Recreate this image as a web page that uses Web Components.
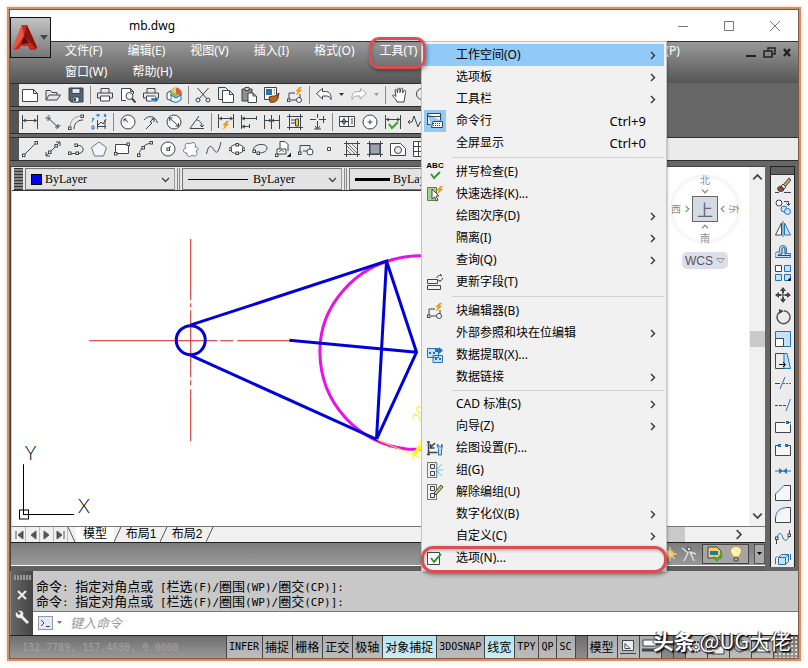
<!DOCTYPE html>
<html lang="zh-CN">
<head>
<meta charset="utf-8">
<title>mb.dwg</title>
<style>
html,body{margin:0;background:#fff}
body{font:12px/16px "Noto Sans","Noto Sans CJK SC",sans-serif;color:#000;--dark:#666;--line:#2e2e2e;--bar:#ebebeb}
</style>
</head>
<body>
<cad-window>
  <title-bar slot="title">mb.dwg</title-bar>
  <menu-bar slot="menu"></menu-bar>
  <tool-bar slot="tools" class="part" label="标准" icons="new open save | print preview plot publish | cut copy paste match blockedit | undo drop redo dropgray | pan zoom"></tool-bar>
  <tool-bar slot="tools" class="part" label="标注" icons="dimlin dimali dimarc dimord | dimrad dimjog dimdia dimang | qdim dimbase dimcont dimspace dimbreak | tol center inspect jogline"></tool-bar>
  <tool-bar slot="tools" label="绘图" icons="line xline pline polygon rect arc circle cloud spline ellipse ellarc insert block point hatch gradient region table"></tool-bar>
  <drawing-pane slot="drawing"></drawing-pane>
  <side-tools slot="side" icons="erase copyobj mirror offset array move rotate scale stretch trim extend breakpt break join chamfer fillet blend explode"></side-tools>
  <command-line slot="command"></command-line>
  <status-bar slot="status"></status-bar>
  <tools-menu slot="popup"></tools-menu>
  <call-out slot="popup" class="one"></call-out>
  <water-mark slot="popup"><strong>头条</strong> @UG大佬</water-mark>
</cad-window>
<script>
const B='#2672b8', Y='#f3a21b';
const bolt=(x,y)=>`<path d="M${x+4} ${y}l-4 4h2.500l-2 4 5-5h-2.500l2.500-3z" fill="${Y}" stroke="#d07c00" stroke-width=".5"/>`;
const sq=(x,y)=>`<rect x="${x}" y="${y}" width="2.500" height="2.500" fill="#fff"/>`;
const p=(d,a='')=>`<path d="${d}" ${a}/>`;
const F='fill="#3d454d" stroke="none"', LB='fill="#c4e2f8"', BL=` stroke="${B}"`, BF=`fill="${B}" stroke="none"`;
const printer=p('M4 6V1.500h8V6M3.500 11h-3V6h15v5h-3')+p('M3.500 9h9v5h-9z','fill="#fff"');
const ICONS={
 new:p('M.5 2.500h11l4 4v8h-15zM11.500 2.500v4h4','fill="#fff"'),
 open:p('M1 13V3.500h4.500l1.500 2h5V8M1 13l3-5h11.500l-3.500 5z','fill="#e3e6ea"'),
 save:p('M1 1h14v14H3l-2-2z','fill="#56617a"')+p('M4 1.500h8v5H4z','fill="#dfe5ef"')+p('M5 10h6v5H5z','fill="#fff"')+p('M6 11h2v3H6z',F),
 print:printer,
 preview:p('M6 13.500H1.500v-12h9l3 3V7M10.500 1.500v3h3','fill="#fff"')+'<circle cx="9.500" cy="9" r="3.500" fill="#eef4fa"/>'+p('M12 11.500l3.500 4','stroke-width="2"'),
 plot:printer+p('M8 11h4V8.500l4 4-4 3.500V14H8z',`fill="${B}" stroke="#fff" stroke-width=".5"`),
 publish:p('M1 6l5-3v11L1 12z','fill="#fff"')+'<circle cx="10" cy="6.500" r="5.500" fill="#7cc576" stroke="#888"/>'+p('M10 1a5.500 5.500 0 0 1 5 7.500L10 6.500z','fill="#ef5a35" stroke="none"')+p('M10 6.500L5 4a5.500 5.500 0 0 1 5-3z','fill="#f7d34a" stroke="none"')+p('M5 8l5 3 5-3v5l-5 2.500L5 14z','fill="#e8f3fb"'+BL),
 cut:p('M2.500 1L12 12M13.500 1L4 12')+'<circle cx="3" cy="13" r="2"/><circle cx="13" cy="13" r="2"/>',
 copy:p('M4 12.500H.5v-12h7l3 3')+p('M4.500 3.500h7l4 4v8h-11zM11.500 3.500v4h4','fill="#fff"'),
 paste:p('M1 2h10v12H1z','fill="#8e8e8e"')+p('M4 .5h4v3H4z','fill="#ddd"')+p('M7 6h5l3.500 3v6.500H7zM12 6v3h3','fill="#fff"'),
 match:p('M.5 .5h12v12H.5z','fill="#fff"')+p('M2 2h6v6H2z',BF)+p('M10 3h1M10 6h1')+p('M5 10c3-1 4-1 6-1l4-3-1 5c-1 4-5 5-8 4z','fill="#b8651f" stroke="#6d3408"'),
 blockedit:p('M2 12V6h6M4 13h5M13 7v4')+sq(.5,12)+'<circle cx="12" cy="13" r="2.500" fill="#fff"/>'+bolt(9,0),
 undo:p('M.5 6.500l6-5v3h3c4 0 6 3 5.500 8-1-3-3-3.500-5-3.500H6.500v3z','fill="#fff"'),
 redo:p('M15.500 6.500l-6-5v3h-3c-4 0-6 3-5.500 8 1-3 3-3.500 5-3.500h3v3z','fill="#fff" stroke="#a8a8a8"'),
 pan:p('M5 15c-1-3-3-4-4.500-6.500 1-1.500 2.500 0 3.500 1L3 3c1-1.500 2 0 2.500 3L6 1.500c1-1.500 2 0 2 4L9 1.500c1-1.500 2 0 1.500 4.500L12 3.500c1-1 2 0 1.500 2L12.500 12 12 15z','fill="#fff"'),
 zoom:'<circle cx="7" cy="7" r="5.500"/>'+p('M11 11l4 4'),
 dimlin:p('M.5 1v14M15.500 1v14M1 6.500h14M4 5L1.500 6.500 4 8M12 5l2.500 1.500L12 8'),
 dimali:p('M.5 5l4-4M11.500 15l4-4M3 4l10 9M3 7V4h3M13 10v3h-3'),
 dimarc:p('M2 14C2 6 7 2 14 2','stroke="#999"')+p('M6 15c0-5 3-9 9-9')+sq(.5,13)+sq(13,1),
 dimord:p('M6.500 15V6M6 12.500h9M7 11l3-3 2 2 3-5M14 6v9')+p('M1 4l2 2M3 4L1 8M6 0h2v2H6zM13 0l2 3M15 0l-2 3M1 12h2v3H1z',BL),
 dimrad:'<circle cx="8" cy="8" r="7" fill="#f8f8f8"/>'+p('M8 8L4 5M4 7.500V5h2.500'),
 dimjog:p('M1 6C5 1 12 1 14.500 9M3 15l6-6-2-1 4-4M8.500 5H11v3'),
 dimdia:'<circle cx="8" cy="8" r="7" fill="#f8f8f8"/>'+p('M3.500 4l9 8M3.500 7V4h3M12.500 9v3h-3'),
 dimang:p('M10 2L1 14.500h14M8 6c4 1 5 4 5 7M11 11l2 2 2-2'),
 qdim:p('M.5 0v14M15.500 0v14M1 4.500h14M4 3L1.500 4.500 4 6M12 3l2.500 1.500L12 6')+bolt(5,7),
 dimbase:p('M.5 1v14M1 4.500h14M8.500 10v4M1 12.500h7M15.500 2v4M4 3L1 4.500 4 6M4 11l-3 1.500L4 14'),
 dimcont:p('M.5 1v14M15.500 1v14M7.500 1v14M1 6.500h14M5 5l2 1.500L5 8M10 5L8 6.500 10 8'),
 dimspace:p('M2.500 0v16M13.500 0v16M0 2.500h16M0 13.500h16M4 6h4M4 9h4')+p('M8.500 5h3v7h-3z','fill="#f7cf2c"'),
 dimbreak:p('M0 5.500h6M9 5.500h7M7.500 0v4M7.500 7v8M4 15h7M5 12l2.500 3L10 12M13.500 2v7'),
 tol:p('M.5 2.500h15v10H.5zM9.500 2.500v10M1 7.500h8M5 3.500v8M12 5.500l1-1v6','fill="#fff"')+'<circle cx="5" cy="7.500" r="2"/>',
 center:'<circle cx="8" cy="8" r="7" fill="#fff"/>'+p('M5.500 8h5M8 5.500v5'),
 inspect:p('M.5 1v14M15.500 1v14M1 5.500h14M4 4L1.500 5.500 4 7M12 4l2.500 1.500L12 7')+p('M4 10l3 4 6-6','stroke="#38a034" stroke-width="2"'),
 jogline:p('M0 8h4l2-6 4 11 2-5h4M2 6L0 8l2 2'),
 line:p('M2 14L14 2')+sq(.5,13)+sq(13,.5),
 xline:p('M1 15L15 1M1 11v4h4M11 1h4v4')+sq(3.5,10)+sq(10,3.5),
 pline:p('M9 4.500c8-1 8 8 1 8H2')+sq(7,3)+sq(8,11)+sq(.5,11),
 polygon:p('M8 1l7.500 5.500-3 8.500h-9l-3-8.500z','fill="#f3f6f9" stroke="#6c7680"'),
 rect:p('M1.500 3.500h13v9h-13z','fill="#fff"')+sq(.5,11.5)+sq(13,2),
 arc:p('M2 14C3 7 8 3 14 2')+sq(.5,13)+sq(5,5.5)+sq(13,.5),
 circle:'<circle cx="8" cy="8" r="7" fill="#fff"/>'+p('M8 8l3-3')+sq(7,7),
 cloud:p('M7 3c2-3 7-1 5 3 4 0 4 4 1 4 3 3-1 7-4 4-2 3-6 1-5-2-4 0-5-4-1-5-3-4 2-6 4-4z','fill="#fff" stroke="#6c7680"'),
 spline:p('M.5 13C3 1 6 6 8 9s4 5 7-8'),
 ellipse:'<ellipse cx="8" cy="8" rx="7" ry="4.500" fill="#fff"/>'+sq(0,7)+sq(13.5,7)+sq(7,2.5)+sq(7,11),
 ellarc:p('M2 10C-1 3 15 1 15 7c0 4-5 5-8 5')+sq(5,11)+sq(1,9),
 insert:p('M5 8V.5h5l3 3V10','fill="#fff"')+p('M2 14V8h9v5H2zM4 11c2-2 4-2 5 0','fill="#fff"')+sq(.5,13)+p('M16 16h-4l4-4z','fill="#000"'),
 block:p('M2 12V4.500h10V10H5')+sq(.5,11)+'<circle cx="12" cy="11" r="3" fill="#fff"/>',
 point:p('M6.500 6.500h3v3h-3z','fill="#fff"'),
 hatch:p('M2.500 0v16M13.500 0v16M0 2.500h16M0 13.500h16')+p('M3 9l4 4M3 5l8 8M4 3l9 9M8 3l5 5','stroke-width=".7"'),
 gradient:p('M3 3h10v10H3z','fill="#9aa3ac"')+p('M2.500 0v16M13.500 0v16M0 2.500h16M0 13.500h16'),
 region:p('M.5 2.500h10l5 5v7H.5z','fill="#fff"')+'<circle cx="8" cy="9" r="3.500" fill="#e6ecf2"/>',
 table:p('M.5 .5h15v15H.5zM.5 5.500h15M.5 10.500h15M5.500 .5v15M10.500 .5v15','fill="#fff"'),
 erase:p('M0 15.500h4M9 15.500h7')+p('M8 8l6-7 2 2-6 7z','fill="#c9a65b"')+p('M6 9l2-2 3 3-2 2z','fill="#ddd"')+p('M5 9l4 4c-2 2-5 2-6 0s0-3 2-4z','fill="#a6402a"'),
 copyobj:'<circle cx="4" cy="4" r="3" fill="#fff"/>'+p('M9 2.500h4.500V6M11.500 4.500l2 2 2-2')+`<circle cx="9" cy="10" r="3" fill="#c4e2f8" ${BL}/><circle cx="12.500" cy="12.500" r="3" fill="#c4e2f8" ${BL}/>`,
 mirror:p('M6.500 2v12H.5z','fill="#fff"')+p('M9.500 2v12h6z',LB+BL)+p('M8 0v16',BL),
 offset:p('M.5 14.500h15v-4h-4V6a3.500 3.500 0 0 0-7 0v3h-2c-3 0-3 4-2 5.500z',LB+BL)+p('M3 12.500h12M3 12.500c0-1 1-1.500 2-1.500h2V6a1.500 1.500 0 0 1 3 0v5h1'),
 array:p('M.5 .5h6v6h-6z','fill="#fff"')+p('M9.500 .5h6v6h-6zM.5 9.500h6v6h-6zM9.500 9.500h6v6h-6z',LB+BL)+p('M16 16h-4l4-4z','fill="#000"'),
 move:p('M8 0l3 4H9v2H7V4H5zM8 16l3-4H9v-2H7v2H5zM0 8l4-3v2h2v2H4v2zM16 8l-4-3v2h-2v2h2v2z',F)+p('M7 7h2v2H7z','fill="#fff"'),
 rotate:p('M4 3.500A6.500 6.500 0 1 0 9 1.700','stroke="#555" stroke-width="1.500"')+p('M4 0l5 2-5 3z',F),
 scale:p('M.5 .5h15v15H8v-7H.5z',LB+BL)+p('M.5 7.500h8v8h-8z','fill="#fff"'),
 stretch:p('M9 .5h3l3.500 15H9z',LB+BL)+p('M9 .5H.5v15H9')+p('M4 11.500h6M8 9l2.500 2.500L8 14','stroke="#000"'),
 trim:p('M5 14L10 2',BL)+p('M0 8.500h5')+p('M8 8.500h2M11 8.500h2M14 8.500h2',BL),
 extend:p('M0 8.500h3M4 8.500h3M8 8.500h3')+p('M11 14L15.500 2',BL),
 breakpt:p('M10 3.500H.5v10h15v-8','fill="#f6f6f6"')+p('M11 2h3v3h-3z',BF)+p('M14 3.500h2',BL),
 break:p('M3 4.500H.5v10h15v-10H13','fill="#f6f6f6"')+p('M3 3h3v3H3zM10 3h3v3h-3z',BF),
 join:p('M0 8h16',BL)+p('M4 5l4 3-4 3zM12 5L8 8l4 3z',BF),
 chamfer:p('M.5 9v6.500h15V.5H9','fill="#f6f6f6"')+p('M.5 9L9 .5',BL),
 fillet:p('M.5 11v4.500h15V.5H12','fill="#f6f6f6"')+p('M.5 11C1 4 5 1 12 .5',BL),
 blend:p('M1.500 15V8M14.500 8V1')+p('M2 8c3-7 5-2 6 1s4 4 6-2',BL)+sq(.5,8)+sq(13,5),
 explode:p('M3.500 6.500h7v7h-7zM3.500 6.500l3-3h7l-3 3M13.500 3.500v7l-3 3M.5 7v6M.5 7l2-2M15.500 3v6',LB+BL),
 cmd:p('M.5 .5h13v7M.5 .5v11h3M1 3.500h12','fill="#fff" stroke-width="1.200"')+p('M6 8.500h9.500v6h-11z','fill="#fff"')+p('M6 10.500h8M6 12.500h8','stroke-dasharray="1 1"'),
 qsel:p('M.5 1.500h9v13h-9z','fill="#a9d08e" stroke="#4f8a3b"')+p('M5 3v10l2.500-2 2 4 1.500-1-2-4h3z','fill="#fff"')+bolt(10,0),
 field:p('M.5 5.500h10v4H.5zM.5 11.500h13v4H.5zM10 4c0-3 3-3 5-2l-2-2M15.500 4c0 3-3 3-4 2l2 2'),
 extract:p('M.5 1.500h11v9H.5zM6 8.500h9.500v7H6z',LB+BL)+p('M2 5h2v2H2zM6 5h2v2H6zM8 11h2v2H8zM12 11h2v2h-2zM8 2h4V0l4 3.500L12 7V5H8z',BF),
 dset:p('M1.500 2v12M1.500 12.500h9M8 3L4 7M3.500 4v4h4M0 2h3M0 14.500h3','stroke-width="1.500"')+p('M10.500 4c-1 3 1 4 1 5v6h3V9c1-1 2-3 0-5v3h-2z',LB+BL),
 group:p('M.5 .5h9v15h-9z','stroke="#000" stroke-dasharray="1 1"')+p('M3.500 2.500h4v4h-4zM3.500 9.500h4v4h-4z')+p('M9 8h7M10 7l5-5M10 9l5 5M10 6V1M10 10v5','stroke="#79bceb"'),
 ungroup:p('M.5 .5h9v15h-9z','stroke="#000" stroke-dasharray="1 1"')+p('M3.500 2.500h4v4h-4zM3.500 9.500h4v4h-4z')+p('M7 9l7-8 2 2-7 8z','fill="#c9c470"'),
 option:p('M.5 2.500h12v12H.5z','fill="#fff"')+p('M4 8l3 4 7-8','stroke="#35962f" stroke-width="2"'),
 sun:'<circle cx="8" cy="8" r="4" fill="#f5b544" stroke="none"/>'+p('M8 1v14M1 8h14M3 3l10 10','stroke="#fbe1a0"'),
 person:'<circle cx="8" cy="3" r="2" fill="#ddd"/>'+p('M1 2l6 5-4 8M15 8L9 6l4 9','stroke="#ddd" stroke-width="1.500"'),
 layerok:p('M1 1h9l4 4v7H1z','fill="#f3d253"')+p('M3 5h8v4H3z',BF)+p('M6 11l4 3 5-6','stroke="#4aa52a" stroke-width="2.500"'),
 bulb:p('M6 11C-1 4 4 .5 8 .5s9 3.500 2 10.500z','fill="#fff1b5" stroke="#c79b35"')+p('M6 12h4v3H6z','fill="#bbb"'),
 wrench:p('M2 2l3 3 2-2-3-2c5-1 6 2 5 5l6 6-2 2-6-6C3 9 1 6 2 2z','fill="#eee" stroke="none"'),
 layout:p('M2.500 1.500h11v10h-11zM0 14.500h16','fill="#eee"')+p('M5 4.500l5 5H5z','fill="#fff"'),
 layout2:p('M1 1h14v6H1z','fill="#fff"')+p('M0 11h16','stroke-width="3"'),
 gear:'<circle cx="8" cy="8" r="5" fill="#eee" stroke-dasharray="2 1" stroke-width="2"/><circle cx="8" cy="8" r="2"/>',
 lock:p('M2 7h12v8H2z','fill="#eee"')+p('M5 7V4c0-4 6-4 6 0v3'),
 bubble:'<circle cx="8" cy="7" r="6" fill="#aaa"/>'+p('M5 5l3 4 4-5'),
 screen:p('M2 2h12v11H2z','fill="#fff"')+p('M6 5h5v5H6z')
};
const icon=(n,s=16)=>`<svg class="ic" aria-hidden="true" width="${s}" height="${s}" viewBox="0 0 16 16" fill="none" stroke="#3d454d" stroke-width="1">${ICONS[n]||''}</svg>`;
const tri=(c='#333')=>`<svg aria-hidden="true" width="5" height="4" viewBox="0 0 5 4"><path d="M0 0h5L2.500 3z" fill="${c}"/></svg>`;
const chev=(r,c='#444',s=9)=>`<svg class="chev" aria-hidden="true" width="${s}" height="${s}" viewBox="0 0 9 9"><path transform="rotate(${r} 4.500 4.500)" d="M3 1l3.500 3.500L3 8" fill="none" stroke="${c}" stroke-width="1.400"/></svg>`;
const mono=t=>t.replace(/[\x20-\x7e]+/g,'<span class="m">$&</span>');
const BASE=`:host,*{box-sizing:border-box}button{font:inherit;color:inherit;background:none;border:0;padding:0;margin:0;display:flex;align-items:center;justify-content:center}svg{display:block;flex:none;overflow:hidden}`;
const def=(tag,css,html)=>customElements.define(tag,class extends HTMLElement{
  constructor(){super();this.attachShadow({mode:'open'})}
  connectedCallback(){const t=document.createElement('template');
    t.innerHTML=`<style>${BASE}${css}</style>${typeof html==='function'?html(this):html}`;
    this.shadowRoot.replaceChildren(t.content.cloneNode(true))}
});

def('cad-window',`
:host{display:flex;flex-direction:column;min-height:100vh;padding:7px}
.frame{position:relative;flex:1;display:flex;flex-direction:column;border:2px solid #cf9070;background:var(--dark);box-shadow:0 0 4px #f6cdb4}
.in{flex:1;display:flex;flex-direction:column;border:1px solid #85573f}
.tools{display:flex;flex-direction:column;gap:3px;padding-bottom:5px}
.body{flex:1;display:flex}
.draw{flex:1;display:flex;min-width:0}`,
`<div class="frame"><div class="in"><slot name="title"></slot><slot name="menu"></slot>
<div class="tools"><slot name="tools"></slot></div>
<div class="body"><div class="draw"><slot name="drawing"></slot></div><slot name="side"></slot></div>
<slot name="command"></slot><slot name="status"></slot></div><slot name="popup"></slot></div>`);

def('title-bar',`
:host{display:flex;align-items:center;height:31px;background:#fff;padding:0 17px 0 0;position:relative}
.app{position:absolute;left:0;top:7px;width:41px;height:41px;border:1px solid #111;background:linear-gradient(#c4c4c4,#777);gap:3px;z-index:2}
.t{flex:1;padding-left:119px}.w{display:flex;gap:34px}`,
`<button class="app" aria-label="应用程序菜单"><svg width="24" height="28" viewBox="0 0 24 28"><path d="M9 1h5l10 22-1 3h-6l-2-4H8l-2 3-5 1-1-3z" fill="#c9291c"/><path d="M9 1l2 11-9 13-2-2z" fill="#e9563f"/><path d="M14 1l-3 11 6 6 6 7 1-2z" fill="#8c1410"/><path d="M8 20l3-8 5 7z" fill="#5b0f0c"/></svg>
<svg width="8" height="5" viewBox="0 0 8 5"><path d="M0 0h8L4 5z" fill="#3d4757"/></svg></button>
<span class="t"><slot></slot></span>
<span class="w"><button aria-label="最小化"><svg width="12" height="12" stroke="#777"><path d="M1 6.500h10"/></svg></button>
<button aria-label="最大化"><svg width="12" height="12" stroke="#777" fill="none"><path d="M1.500 1.500h9v9h-9z"/></svg></button>
<button aria-label="关闭"><svg width="12" height="12" stroke="#777"><path d="M1 1l10 10M11 1L1 11"/></svg></button></span>`);

def('menu-bar',`
:host{display:flex;height:42px;background:linear-gradient(#999,#555);border-top:1px solid #333;color:#fff;padding-left:55px}
nav{flex:1;display:flex;flex-wrap:wrap;column-gap:25px;row-gap:5px;align-content:center;padding-right:16px;padding-bottom:2px}
.more{flex:0 0 198px}
.c{display:flex;gap:5px;padding:3px 5px 0;height:18px}`,
`<nav aria-label="菜单">${['文件(F)','编辑(E)','视图(V)','插入(I)','格式(O)','工具(T)','','(P)','窗口(W)','帮助(H)'].map(x=>x?`<button>${x}</button>`:'<span class="more"></span>').join('')}</nav>
<div class="c"><button aria-label="最小化图形"><svg width="13" height="14"><path d="M1 9h10v2H1z" fill="#222"/></svg></button>
<button aria-label="还原图形"><svg width="13" height="14" fill="none" stroke="#222" stroke-width="1.500"><path d="M5 5V2h7v6H9M1 5h8v6H1z"/></svg></button>
<button aria-label="关闭图形"><svg width="12" height="14" stroke="#222" stroke-width="2.500"><path d="M3 3l6 7M9 3l-6 7"/></svg></button></div>`);

def('tool-bar',`
:host{display:flex;height:24px;border:1px solid var(--line);border-left:0;border-right:0;background:var(--bar)}
:host(.part){margin-right:142px}
.g{width:9px;background:#555}
.r{display:flex;align-items:center;gap:7px;padding-left:3px;min-width:0;overflow:hidden}
i{width:1px;height:18px;background:#888;margin:0 -1px;flex:none}`,
h=>`<div class="g"></div><div class="r" role="toolbar" aria-label="${h.getAttribute('label')}">${h.getAttribute('icons').split(' ').map(n=>n==='|'?'<i></i>':`<button aria-label="${n}">${n==='drop'?tri():n==='dropgray'?tri('#999'):icon(n)}</button>`).join('')}</div>`);

def('side-tools',`
:host{display:block;width:33px;padding:0 3px 4px 5px}
.b{border:1px solid #222;border-bottom:0;background:#ececec;height:100%}
.h{height:8px;background:#606060;border-bottom:1px solid #333;margin-bottom:2px}
.c{display:flex;flex-direction:column;align-items:center;gap:6px}`,
h=>`<div class="b"><div class="h"></div><div class="c" role="toolbar" aria-label="修改">${h.getAttribute('icons').split(' ').map(n=>`<button aria-label="${n}">${icon(n)}</button>`).join('')}</div></div>`);

def('prop-combo',`
:host{display:flex;align-items:center;height:22px;width:150px;flex:none;background:#e3e3e3;border:1px solid #777;border-right-color:#999;padding:0 4px 0 5px;gap:3px}
:host(.w){width:160px}
.s{width:11px;height:11px;background:#00f;border:1px solid #000}
.l{width:60px;height:1px;background:#000;margin-right:2px}
.k{width:35px;height:3px;background:#000}
select{appearance:none;flex:1;min-width:0;border:0;background:none;padding:0;margin:0;font:12px/16px "Liberation Serif","Noto Sans CJK SC",serif;color:#000}`,
h=>`<span class="${h.getAttribute('kind')}"></span><select aria-label="${h.getAttribute('label')}"><option>ByLayer</option></select>${chev(90)}`);

def('nav-compass',`
:host{display:grid;justify-items:center;width:72px;color:#8b8b8b;font:10px/12px "Noto Sans CJK SC",sans-serif}
.d{display:grid;grid-template-columns:12px 8px 26px 8px 12px;justify-content:center;align-items:center;justify-items:center;gap:1px;width:72px;position:relative;border-radius:50%;box-shadow:inset 0 0 0 4px #f7f7f7}
.x{grid-column:1/-1}
.u{width:26px;height:26px;border:1px solid #666;background:#d5dbe3;font-size:16px;line-height:22px;color:#667}
.w{margin-top:8px;height:17px;width:46px;border-radius:5px;background:#dddeeb;font:12px/16px "Liberation Sans",sans-serif;color:#555;gap:3px}
.e{display:inline-block;transform:rotate(90deg)}`,
`<div class="d"><span class="x">北</span><span class="x">${chev(90,'#888',8)}</span><span>西</span>${chev(0,'#888',8)}<button class="u">上</button>${chev(180,'#888',8)}<span class="e">东</span><span class="x">${chev(-90,'#888',8)}</span><span class="x">南</span></div>
<button class="w">WCS<svg width="9" height="6" fill="none" stroke="#999"><path d="M.5 .5h8L4.500 5z"/></svg></button>`);

def('drawing-pane',`
:host{flex:1;min-width:0;display:flex;flex-direction:column;border-left:1px solid #444;border-top:1px solid #444;position:relative}
.a{flex:1;display:flex;min-height:0;background:#fff;border-left:1px solid #ccc}
.cv{flex:1;min-width:0;display:flex;flex-direction:column;position:relative}
.pb{display:flex;width:500px;overflow:hidden;height:24px;background:#e8e8e8;border-bottom:1px solid #333;padding:1px 0 0 2px;gap:2px}
.gr{width:9px;height:22px;flex:none;background:repeating-linear-gradient(#333 0 1px,#888 1px 3px)}
.sp{width:3px;flex:none;border:1px solid #888;border-width:0 1px}
.sc{flex:1;position:relative;min-height:0}
.sc svg{position:absolute;inset:0;width:100%;height:100%}
nav-compass{position:absolute;right:8px;top:7px}
.vs{width:16px;background:#f0f0f0;display:flex;flex-direction:column;align-items:center;padding:5px 0}
.vs b{width:15px;height:16px;background:#c9c9c9}
.tb{display:flex;align-items:stretch;height:16px;background:#f0f0f0;font:12px/15px "Liberation Sans","Noto Sans CJK SC",sans-serif;border-top:1px solid #777;border-left:1px solid #ccc}
.tb button{width:14px;border-right:1px solid #bbb;flex:none}
.tb .t{width:38px;border:0;background:#f0f0f0}
.tb .t.on{background:#fff}
.hs{margin-left:auto;display:flex;align-items:center;gap:48px;padding-right:21px}.hs b{width:60px;height:15px;background:#c9c9c9}
.ms{display:flex;justify-content:flex-end;align-items:center;height:24px;border-top:1px solid #222;border-bottom:1px solid #fff;background:linear-gradient(#7d7d7d,#999);gap:3px}
.ms .p{display:flex;gap:5px;height:20px;align-items:center;border:1px solid #444;padding:0 4px;background:#a5a5a5;margin-left:2px}
.ms .v{width:11px;height:20px;background:#aaa;border:1px solid #555;margin-left:2px}
.gp{height:5px;background:#606060}`,
`<div class="a"><div class="cv"><div class="pb"><span class="gr"></span><prop-combo kind="s" label="颜色"></prop-combo><span class="sp"></span><prop-combo class="w" kind="l" label="线型"></prop-combo><span class="sp"></span><prop-combo class="w" kind="k" label="线宽"></prop-combo></div>
<div class="sc"><svg viewBox="12 191 736 335" preserveAspectRatio="xMinYMin slice" fill="none">
<g stroke="#d02020"><path d="M190.500 239v61m0 3v4m0 3v67m0 3v5m0 4v52M89 340.500h128m3 0h13m4 0h65"/></g>
<path d="M430 256.500c-8-1-20-1-29 1C355 266 319 305 319.500 352c.5 50 37 91 88 97h23" stroke="#e612e6" stroke-width="3"/>
<g stroke="#0000d8" stroke-width="3"><circle cx="190.500" cy="340" r="14.500"/><path d="M190 325l196-64-10 178-186-84M386 261l30 91-40 87M289 340l127 12"/></g>
<g stroke="#ff0"><path d="M376 439l45 19M411 460l10-21"/><path d="M413 454l8-8" stroke-width="4"/></g>
<text transform="translate(421 424) rotate(-66)" font-family="Open Sans" font-weight="300" font-size="15" fill="#e8e000">20</text>
<path d="M23.500 464v50H74M19.500 509.500h9v9h-9z" stroke="#000"/>
<g fill="#000" font-family="Lato" font-weight="300" font-size="19"><text x="25" y="460">Y</text><text x="78" y="513">X</text></g></svg></div>
<nav-compass></nav-compass></div>
<div class="vs">${chev(-90,'#444',11)}<span style="flex:148"></span><b></b><span style="flex:164"></span>${chev(90,'#444',11)}</div></div>
<div class="tb">${['M3 2v8M10 2L5 6l5 4z','M9 2L4 6l5 4z','M3 2l5 4-5 4z','M2 2l5 4-5 4zM9 2v8'].map((d,i)=>`<button aria-label="${['首个','上一个','下一个','末个'][i]}布局"><svg width="11" height="12" fill="#555" stroke="#555"><path d="${d}"/></svg></button>`).join('')}
${['模型','布局1','布局2'].map((t,i)=>`<svg width="8" height="15" fill="${i==1?'#fff':'#f0f0f0'}" stroke="#555"><path d="${i?'M0 15L7 0':'M0 0l7 15'}"/></svg><button class="t ${i?'':'on'}">${t}</button>`).join('')}<svg width="8" height="15" stroke="#555"><path d="M0 15L7 0"/></svg>
<div class="hs"><b></b>${chev(0,'#444',11)}</div></div>
<div class="ms"><button aria-label="注释可见性">${icon('sun')}</button><button aria-label="自动缩放">${icon('person')}</button><span class="p"><button aria-label="图层">${icon('layerok')}</button><button aria-label="灯泡">${icon('bulb')}</button></span><button class="v" aria-label="更多">${tri('#000')}</button></div><div class="gp"></div>`);

def('command-line',`
:host{display:flex;height:65px;border-bottom:1px solid #222}
.s{width:23px;background:linear-gradient(90deg,#666,#444);display:flex;flex-direction:column;align-items:center;gap:10px;padding-top:4px;border-left:1px solid #888}
.d{width:17px;height:5px;background:repeating-linear-gradient(90deg,#999 0 2px,#555 2px 3px)}
.r{flex:1;display:flex;flex-direction:column;background:#fff}
.h{height:41px;background:#c8c8c8;border-bottom:1px solid #777;padding:8px 3px 0;font:13px/15px "Liberation Sans","Noto Sans CJK SC",sans-serif;white-space:pre}
.m{font:11px/15px "DejaVu Sans Mono",monospace}
.h div{height:15px}
.i{display:flex;align-items:center;gap:4px;padding:3px 5px 0}
.q{width:15px;height:14px;border:1px solid #8c98ac;background:#e4e9f2}
input{flex:1;border:0;padding:0 0 0 4px;background:none;font:italic 13px/16px "Noto Sans CJK SC",sans-serif;outline:0}
input::placeholder{color:#999;opacity:1}`,
`<div class="s"><span class="d"></span><button aria-label="关闭"><svg width="10" height="10" stroke="#eee" stroke-width="2"><path d="M1 1l8 8M9 1L1 9"/></svg></button><button aria-label="自定义">${icon('wrench')}</button></div>
<div class="r"><div class="h"><div>${mono('命令: 指定对角点或 [栏选(F)/圈围(WP)/圈交(CP)]:')}</div><div>${mono('命令: 指定对角点或 [栏选(F)/圈围(WP)/圈交(CP)]:')}</div></div>
<div class="i"><button class="q" aria-label="最近命令"><svg width="11" height="10" fill="none" stroke="#444"><path d="M1 2l3 3-3 3M6 8.500h4"/></svg></button>${tri('#777')}<input aria-label="命令" placeholder="键入命令"></div></div>`);

def('status-bar',`
:host{display:flex;height:22px;background:linear-gradient(#6e6e6e,#999);font:12px/20px "Noto Sans CJK SC",sans-serif;white-space:nowrap}
.m{font:10px/20px "DejaVu Sans Mono",monospace}
.c{flex:0 0 216px;padding-left:12px;color:#a2a2a2}
button{background:linear-gradient(#aaa,#bdbdbd);border:solid #444;border-width:0 1px 0 0;padding:0 3px 0 2px}
.c+button{border-left-width:1px}
.on{background:linear-gradient(#b9e4ee,#c9edf5)}
.g{width:12px;background:linear-gradient(#6e6e6e,#8c8c8c);border-right:1px solid #444}
.f{flex:1;background-image:radial-gradient(#ddd 1px,transparent 1px);background-size:4px 4px}`,
`<span class="c">${mono('132.7789, 157.4680, 0.0000')}</span>${['INFER','捕捉','栅格','正交','极轴','对象捕捉','3DOSNAP','线宽','TPY','QP','SC'].map(t=>`<button class="${t==='对象捕捉'||t==='线宽'?'on':''}" aria-pressed="${t==='对象捕捉'||t==='线宽'}">${mono(t)}</button>`).join('')}<span class="g"></span><button>模型</button>${['layout','layout2'].map(n=>`<button aria-label="${n}">${icon(n)}</button>`).join('')}<span class="g"></span><span class="g"></span>${['gear','lock','bubble','screen'].map(n=>`<button aria-label="${n}">${icon(n)}</button>`).join('')}<span class="f"></span>`);

def('menu-entry',`
:host{display:block;height:22px}
button{width:100%;height:22px;justify-content:flex-start;padding-right:7px;text-align:left}
:host([current]) button{background:#91c9f7}
.k{width:22px;height:22px;margin-right:10px;display:flex;flex-direction:column;align-items:center;justify-content:center}
:host([checked]) .k{background:#91c9f7}
.t{flex:1}.s{font-size:13px;margin-right:11px}
.abc{font:bold 8px/8px "Liberation Sans",sans-serif;margin-top:-2px}`,
h=>{const n=h.getAttribute('icon');return `<button role="menuitem"><span class="k">${n==='spell'?'<span class="abc">ABC</span><svg width="14" height="10" fill="none"><path d="M3 4l3 4 6-6" stroke="#35962f" stroke-width="2"/></svg>':n?icon(n):''}</span><span class="t"><slot></slot></span>${h.hasAttribute('key')?`<span class="s">${h.getAttribute('key')}</span>`:''}${h.hasAttribute('more')?chev(0,'#333'):''}</button>`});

def('tools-menu',`
:host{position:absolute;left:412px;top:32px;width:246px;padding:2px;background:#f1f1f1;border:1px solid #c4c4c4;z-index:3;box-shadow:1px 1px 2px #0003}
hr{margin:3px 0 3px 28px;border:0;height:1px;background:#d2d2d2}
hr.n{margin:2px 0 2px 28px}
.o{position:relative}
call-out{position:absolute;left:-3px;right:-3px;top:-1px;height:27px}`,
`<div role="menu" aria-label="工具"><menu-entry current more>工作空间(O)</menu-entry><menu-entry more>选项板</menu-entry><menu-entry more>工具栏</menu-entry><menu-entry icon="cmd" checked key="Ctrl+9">命令行</menu-entry><menu-entry key="Ctrl+0">全屏显示</menu-entry><hr>
<menu-entry icon="spell">拼写检查(E)</menu-entry><menu-entry icon="qsel">快速选择(K)...</menu-entry><menu-entry more>绘图次序(D)</menu-entry><menu-entry more>隔离(I)</menu-entry><menu-entry more>查询(Q)</menu-entry><menu-entry icon="field">更新字段(T)</menu-entry><hr>
<menu-entry icon="blockedit">块编辑器(B)</menu-entry><menu-entry more>外部参照和块在位编辑</menu-entry><menu-entry icon="extract">数据提取(X)...</menu-entry><menu-entry more>数据链接</menu-entry><hr class="n">
<menu-entry more>CAD 标准(S)</menu-entry><menu-entry more>向导(Z)</menu-entry><menu-entry icon="dset">绘图设置(F)...</menu-entry><menu-entry icon="group">组(G)</menu-entry><menu-entry icon="ungroup">解除编组(U)</menu-entry><menu-entry more>数字化仪(B)</menu-entry><menu-entry more>自定义(C)</menu-entry><div class="o"><menu-entry icon="option">选项(N)...</menu-entry><call-out></call-out></div></div>`);

def('call-out',`
:host{display:block;border:3px solid #dc4c50;border-radius:12px;pointer-events:none;box-shadow:1px 2px 4px #0006,inset 1px 2px 3px #0003}
:host(.one){position:absolute;left:360px;top:28px;width:57px;height:32px;border-radius:10px;z-index:4}`,'');

def('water-mark',`
:host{position:absolute;right:8px;bottom:6px;z-index:5;font:21px/26px "Noto Sans CJK SC",sans-serif;color:#fff;text-shadow:1px 1px 1px #000,-1px 0 1px #333,2px 2px 1px #0008;white-space:nowrap;pointer-events:none}`,'<slot></slot>');
</script>
</body>
</html>
